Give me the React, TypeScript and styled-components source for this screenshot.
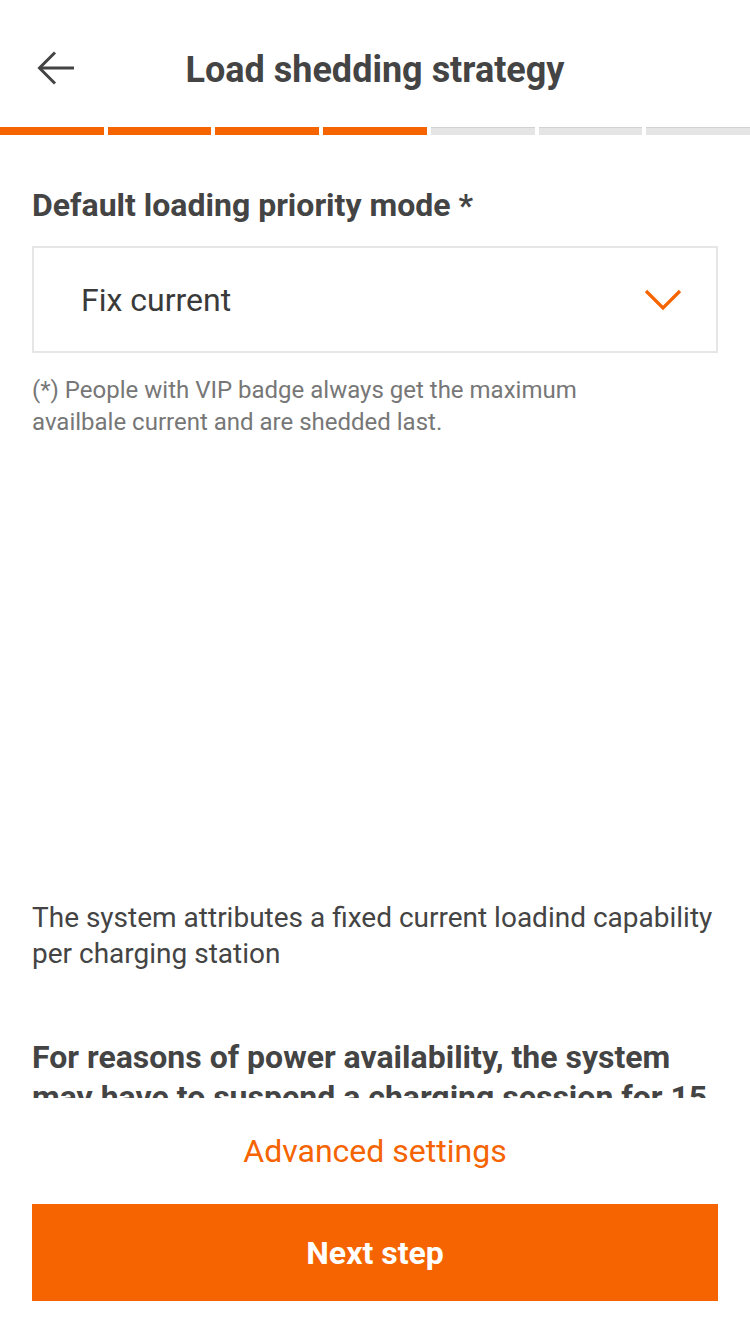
import React from "react";
import styled, { createGlobalStyle } from "styled-components";

const ORANGE = "#f56400";

const Global = createGlobalStyle`
  html, body { margin: 0; padding: 0; background: #fff; }
  body { font-family: Roboto, "Noto Sans", Arial, sans-serif; -webkit-font-smoothing: antialiased; }
  * { box-sizing: border-box; }
`;

const Screen = styled.div`
  width: 750px;
  height: 1334px;
  display: flex;
  flex-direction: column;
  background: #fff;
  overflow: hidden;
`;

const Header = styled.header`
  height: 127px;
  flex: none;
  display: grid;
  grid-template-columns: 112px 1fr 112px;
  align-items: center;
  padding-top: 12px;
`;

const BackButton = styled.button`
  border: 0;
  background: none;
  padding: 0;
  margin-left: 36px;
  width: 40px;
  height: 40px;
  display: flex;
  align-items: center;
  justify-content: center;
  color: #444;
  margin-top: -3px;
`;

const Title = styled.h1`
  margin: 0;
  text-align: center;
  font-size: 36px;
  font-weight: 700;
  color: #444;
  white-space: nowrap;
`;

const Progress = styled.div`
  height: 8px;
  flex: none;
  display: flex;
  gap: 4px;
`;

const Segment = styled.div<{ $done: boolean }>`
  flex: 1;
  background: ${(p) => (p.$done ? ORANGE : "#e5e5e5")};
  border-top: 1px solid ${(p) => (p.$done ? ORANGE : "#d2d2d2")};
`;

const Scroll = styled.main`
  flex: 1;
  overflow: hidden;
  padding: 50px 32px 0;
  display: flex;
  flex-direction: column;
`;

const Label = styled.div`
  font-size: 32px;
  line-height: 40px;
  font-weight: 700;
  color: #444;
`;

const Select = styled.div`
  margin-top: 21px;
  height: 107px;
  border: 2px solid #e6e6e6;
  display: flex;
  align-items: center;
  justify-content: space-between;
  padding: 0 34px 0 47px;
  flex: none;
`;

const SelectValue = styled.span`
  font-size: 32px;
  color: #3a3a3a;
`;

const Helper = styled.p`
  margin: 21px 0 0;
  font-size: 24px;
  line-height: 32px;
  color: #777;
  max-width: 580px;
`;

const Blank = styled.div`
  height: 462px;
  flex: none;
`;

const Description = styled.p`
  margin: 0;
  font-size: 28px;
  line-height: 36px;
  color: #444;
`;

const Notice = styled.p`
  margin: 65px 0 0;
  font-size: 32px;
  line-height: 40px;
  font-weight: 700;
  color: #444;
`;

const Footer = styled.footer`
  flex: none;
  height: 236px;
  padding: 33px 32px 33px;
  display: flex;
  flex-direction: column;
  gap: 33px;
  background: #fff;
  position: relative;
`;

const LinkButton = styled.button`
  border: 0;
  background: none;
  padding: 0;
  height: 40px;
  font-family: inherit;
  font-size: 32px;
  line-height: 40px;
  color: ${ORANGE};
  text-align: center;
`;

const PrimaryButton = styled.button`
  border: 0;
  height: 97px;
  background: ${ORANGE};
  color: #fff;
  font-family: inherit;
  font-size: 32px;
  font-weight: 700;
`;

export default function App() {
  const steps = [true, true, true, true, false, false, false];
  return (
    <>
      <Global />
      <Screen>
        <Header>
          <BackButton aria-label="Back">
            <svg width="38" height="34" viewBox="0 0 38 34" fill="none">
              <path d="M2 17H37" stroke="#444" strokeWidth="3" />
              <path d="M18 1.5L2.5 17L18 32.5" stroke="#444" strokeWidth="3" />
            </svg>
          </BackButton>
          <Title>Load shedding strategy</Title>
          <div />
        </Header>
        <Progress>
          {steps.map((d, i) => (
            <Segment key={i} $done={d} />
          ))}
        </Progress>
        <Scroll>
          <Label>Default loading priority mode *</Label>
          <Select>
            <SelectValue>Fix current</SelectValue>
            <svg width="38" height="22" viewBox="0 0 38 22" fill="none">
              <path d="M2 2L19 19L36 2" stroke={ORANGE} strokeWidth="3.2" />
            </svg>
          </Select>
          <Helper>
            (*) People with VIP badge always get the maximum availbale current and are shedded last.
          </Helper>
          <Blank />
          <Description>
            The system attributes a fixed current loadind capability per charging station
          </Description>
          <Notice>
            For reasons of power availability, the system may have to suspend a charging session for 15 minutes
          </Notice>
        </Scroll>
        <Footer>
          <LinkButton>Advanced settings</LinkButton>
          <PrimaryButton>Next step</PrimaryButton>
        </Footer>
      </Screen>
    </>
  );
}
